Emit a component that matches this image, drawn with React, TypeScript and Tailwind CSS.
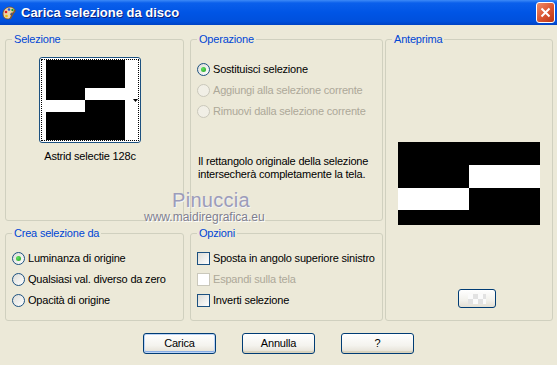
import type { ReactNode } from "react";

const font = "font-['Liberation_Sans',Arial,sans-serif]";

function Radio({ checked, disabled }: { checked?: boolean; disabled?: boolean }) {
  return (
    <span
      className={
        disabled
          ? "flex h-[13px] w-[13px] shrink-0 items-center justify-center rounded-full border border-[#cac8bb] bg-[#f1efe6]"
          : "flex h-[13px] w-[13px] shrink-0 items-center justify-center rounded-full border border-[#1c5180] bg-[linear-gradient(135deg,#dcdcd7,#ffffff)]"
      }
    >
      {checked && (
        <span className="h-[5px] w-[5px] rounded-full bg-[radial-gradient(circle_at_35%_35%,#5fe05f,#21a121)]" />
      )}
    </span>
  );
}

function Check({ disabled }: { disabled?: boolean }) {
  return (
    <span
      className={
        disabled
          ? "h-[13px] w-[13px] shrink-0 border border-[#cac8bb] bg-white"
          : "h-[13px] w-[13px] shrink-0 border border-[#1c5180] bg-[linear-gradient(135deg,#dcdcd7,#ffffff)]"
      }
    />
  );
}

function Row({ control, label, disabled }: { control: ReactNode; label: string; disabled?: boolean }) {
  return (
    <div className="flex h-[21px] items-center gap-[3px] pl-[6px]">
      {control}
      <span className={disabled ? "text-[#aca899]" : "text-black"}>{label}</span>
    </div>
  );
}

function Group({ title, className, children }: { title: string; className: string; children: ReactNode }) {
  return (
    <fieldset className={`rounded-[3px] border border-[#d0d0bf] ${className}`}>
      <legend className="ml-[6px] px-[2px] text-[11px] leading-[13px] text-[#0046d5]">{title}</legend>
      {children}
    </fieldset>
  );
}

function XpButton({ children, primary }: { children: ReactNode; primary?: boolean }) {
  return (
    <button
      className={
        "flex h-[21px] w-[73px] items-center justify-center rounded-[3px] border border-[#003c74] bg-[linear-gradient(#ffffff,#f4f3ee_60%,#e3dfd3)] text-[11px] text-black " +
        (primary
          ? "shadow-[inset_0_0_0_1px_#bcd4f6,inset_0_-1px_0_1px_#89ade4]"
          : "shadow-[inset_0_-2px_0_#d8d2bd]")
      }
    >
      {children}
    </button>
  );
}

function PaletteIcon() {
  return (
    <svg width="16" height="16" viewBox="0 0 16 16">
      <path d="M2 9c0-4 3-7 7-7 3 0 5 2 5 4 0 2-2 2-3 2s-2 1-1 2c1 2-1 4-3 4-3 0-5-2-5-5z" fill="#e8d3a8" stroke="#7a4a1a" strokeWidth="0.8" />
      <circle cx="5" cy="7" r="1.3" fill="#e02020" />
      <circle cx="8" cy="4.5" r="1.3" fill="#2050e0" />
      <circle cx="11.5" cy="5" r="1.2" fill="#20a020" />
      <circle cx="5.5" cy="11" r="1.3" fill="#f0c000" />
      <path d="M9 14l5-9" stroke="#8a5a2a" strokeWidth="1.5" />
    </svg>
  );
}

export default function App() {
  return (
    <div className={`relative h-[365px] w-[557px] overflow-hidden bg-[#ece9d8] text-[11px] tracking-[-0.2px] ${font}`}>
      {/* title bar */}
      <div className="flex h-[25px] items-center bg-[linear-gradient(#3d8af7,#0a5feb_12%,#0055e5_50%,#0050dc_85%,#0043c4)]">
        <span className="ml-[1px]">
          <PaletteIcon />
        </span>
        <span className="ml-[4px] text-[13px] font-bold tracking-normal text-white [text-shadow:1px_1px_0_#0a1f7a]">
          Carica selezione da disco
        </span>
        <span className="ml-auto mr-[2px] flex h-[21px] w-[19px] items-center justify-center rounded-[3px] border border-white bg-[linear-gradient(135deg,#f08c6a,#d9532f_55%,#b83616)]">
          <svg width="11" height="11" viewBox="0 0 11 11">
            <path d="M1.5 1.5l8 8M9.5 1.5l-8 8" stroke="white" strokeWidth="2" />
          </svg>
        </span>
      </div>

      <div className="flex pl-[5px] pt-[8px]">
        {/* left column */}
        <div className="flex flex-col gap-[6px]">
          <Group title="Selezione" className="h-[188px] w-[179px]">
            <div className="ml-[33px] mt-[11px] flex w-[102px] flex-col items-center">
              <div className="h-[86px] w-[102px] rounded-[3px] border border-[#1c5180] bg-white">
                <div className="m-[1px] flex h-[82px] border border-dotted border-black">
                  <div className="ml-[4px] flex w-[79px] flex-col bg-black">
                    <div className="h-[28px]" />
                    <div className="flex h-[12px]">
                      <div className="w-[39px]" />
                      <div className="flex-1 bg-white" />
                    </div>
                    <div className="flex h-[12px]">
                      <div className="w-[39px] bg-white" />
                      <div className="flex-1" />
                    </div>
                  </div>
                  <div className="flex flex-1 items-center justify-end">
                    <svg width="5" height="3" viewBox="0 0 5 3">
                      <path d="M0 0h5L2.5 3z" fill="black" />
                    </svg>
                  </div>
                </div>
              </div>
              <div className="mt-[7px] whitespace-nowrap leading-[13px]">Astrid selectie 128c</div>
            </div>
          </Group>
          <Group title="Crea selezione da" className="h-[94px] w-[179px]">
            <div className="mt-[8px]">
              <Row control={<Radio checked />} label="Luminanza di origine" />
              <Row control={<Radio />} label="Qualsiasi val. diverso da zero" />
              <Row control={<Radio />} label="Opacità di origine" />
            </div>
          </Group>
        </div>

        {/* middle column */}
        <div className="ml-[6px] flex flex-col gap-[6px]">
          <Group title="Operazione" className="h-[188px] w-[193px]">
            <div className="mt-[13px]">
              <Row control={<Radio checked />} label="Sostituisci selezione" />
              <Row control={<Radio disabled />} label="Aggiungi alla selezione corrente" disabled />
              <Row control={<Radio disabled />} label="Rimuovi dalla selezione corrente" disabled />
            </div>
            <p className="ml-[7px] mt-[33px] leading-[13px]">
              Il rettangolo originale della selezione
              <br />
              intersecherà completamente la tela.
            </p>
          </Group>
          <Group title="Opzioni" className="h-[94px] w-[193px]">
            <div className="mt-[8px]">
              <Row control={<Check />} label="Sposta in angolo superiore sinistro" />
              <Row control={<Check disabled />} label="Espandi sulla tela" disabled />
              <Row control={<Check />} label="Inverti selezione" />
            </div>
          </Group>
        </div>

        {/* right column */}
        <Group title="Anteprima" className="ml-[2px] h-[288px] w-[168px]">
          <div className="ml-[12px] mt-[96px] flex h-[83px] w-[142px] flex-col bg-black">
            <div className="h-[23px]" />
            <div className="flex h-[23px]">
              <div className="w-[71px]" />
              <div className="flex-1 bg-white" />
            </div>
            <div className="flex h-[22px]">
              <div className="w-[71px] bg-white" />
              <div className="flex-1" />
            </div>
          </div>
          <div className="ml-[72px] mt-[64px] flex h-[19px] w-[38px] items-center justify-center rounded-[3px] border border-[#003c74] bg-[linear-gradient(#ffffff,#f2f1ec_60%,#e3dfd3)]">
            <div className="h-[10px] w-[18px] bg-[conic-gradient(#e2e2e2_25%,#fbfbfb_0_50%,#e2e2e2_0_75%,#fbfbfb_0)] bg-[length:10px_10px]" />
          </div>
        </Group>
      </div>

      {/* buttons */}
      <div className="mt-[12px] flex justify-center gap-[26px]">
        <XpButton primary>Carica</XpButton>
        <XpButton>Annulla</XpButton>
        <XpButton>?</XpButton>
      </div>

      {/* watermark */}
      <div className="pointer-events-none absolute left-[172px] top-[190px] text-[20px] leading-none tracking-[0.3px] text-[#9c9cba] [text-shadow:1px_1px_0_#f4f4f4]">
        Pinuccia
      </div>
      <div className="pointer-events-none absolute left-[144px] top-[211px] text-[12px] leading-none tracking-normal text-[#7f7f8f] [text-shadow:1px_1px_0_#ffffff]">
        www.maidiregrafica.eu
      </div>
    </div>
  );
}
